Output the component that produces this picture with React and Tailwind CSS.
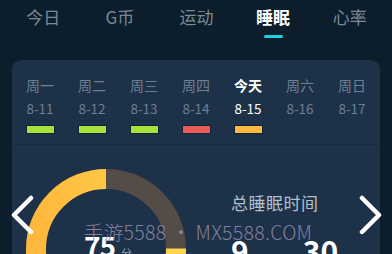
import React from "react";

const tabs = ["今日", "G币", "运动", "睡眠", "心率"];

const days = [
  { name: "周一", date: "8-11", bar: "bg-[#a6e23a]" },
  { name: "周二", date: "8-12", bar: "bg-[#a6e23a]" },
  { name: "周三", date: "8-13", bar: "bg-[#a6e23a]" },
  { name: "周四", date: "8-14", bar: "bg-[#ec5b55]" },
  { name: "今天", date: "8-15", bar: "bg-[#ffb93e]", today: true },
  { name: "周六", date: "8-16" },
  { name: "周日", date: "8-17" },
];

function ScoreRing({ score }) {
  const r = 70;
  const c = 2 * Math.PI * r;
  return (
    <svg width="160" height="160" viewBox="0 0 160 160" className="block">
      <defs>
        <linearGradient id="ring" x1="0" y1="0" x2="0" y2="1">
          <stop offset="0" stopColor="#ffd54d" />
          <stop offset="1" stopColor="#ffb83d" />
        </linearGradient>
      </defs>
      <circle cx="80" cy="80" r={r} fill="none" stroke="#544c47" strokeWidth="20" />
      <circle
        cx="80"
        cy="80"
        r={r}
        fill="none"
        stroke="url(#ring)"
        strokeWidth="20"
        strokeDasharray={`${(score / 100) * c} ${c}`}
        transform="translate(160 0) scale(-1 1) rotate(-90 80 80)"
      />
    </svg>
  );
}

function Chevron({ dir }) {
  const d = dir === "left" ? "M21 3 L4 20 L21 37" : "M4 3 L21 20 L4 37";
  return (
    <svg width="25" height="40" viewBox="0 0 25 40">
      <path d={d} fill="none" stroke="#ffffff" strokeWidth="4.5" strokeLinecap="round" strokeLinejoin="round" />
    </svg>
  );
}

export default function App() {
  return (
    <div
      className="relative w-[392px] h-[254px] overflow-hidden bg-[#0c1e2c]"
      style={{ fontFamily: '"Noto Sans CJK SC", "Noto Sans", sans-serif' }}
    >
      <div className="flex h-[60px] pl-[5px] pr-[4px]">
        {tabs.map((t, i) => (
          <div key={t} className="flex-1 flex flex-col items-center pt-[4px]">
            <span
              className={
                i === 3
                  ? "text-[17px] leading-[26px] text-white font-bold"
                  : "text-[17px] leading-[26px] text-[#7b8995]"
              }
            >
              {t}
            </span>
            {i === 3 && <div className="mt-[5px] w-[19px] h-[3px] rounded-full bg-[#19d3de]" />}
          </div>
        ))}
      </div>

      <div className="mx-3 rounded-t-[9px] bg-[#1d3148] h-[220px]">
        <div className="grid grid-cols-7 px-[2px] pt-[15px]">
          {days.map((d) => (
            <div key={d.date} className="flex flex-col items-center">
              <span
                className={
                  d.today
                    ? "text-[14px] leading-[20px] text-white font-bold"
                    : "text-[14px] leading-[20px] text-[#6d7f91]"
                }
              >
                {d.name}
              </span>
              <span
                className={
                  d.today
                    ? "mt-[3px] text-[13.5px] leading-[20px] text-white"
                    : "mt-[3px] text-[13.5px] leading-[20px] text-[#6d7f91]"
                }
              >
                {d.date}
              </span>
              {d.bar ? (
                <div className={`mt-[7px] w-[29px] h-[9px] border border-[#10233a] ${d.bar}`} />
              ) : (
                <div className="mt-[7px] h-[9px]" />
              )}
            </div>
          ))}
        </div>
        <div className="mt-[10px] h-px bg-[#172a3f]" />

        <div className="flex pl-[14px] pt-[24px]">
          <div className="relative">
            <ScoreRing score={75} />
            <div className="absolute left-[58px] top-[62px] flex items-end">
              <span className="text-[28px] leading-none font-bold text-white tracking-[-1px]">75</span>
              <span className="ml-[6px] text-[11px] leading-none text-[#9aa5b1]">分</span>
            </div>
          </div>
          <div className="ml-[45px] pt-[22px] flex flex-col">
            <span className="text-[17px] leading-[24px] text-[#b4c0cc] tracking-[0.5px]">总睡眠时间</span>
            <div className="mt-[20px] flex items-start">
              <span className="text-[30px] leading-none font-bold text-white">9</span>
              <span className="ml-[54px] text-[30px] leading-none font-bold text-white">30</span>
            </div>
          </div>
        </div>
      </div>

      <div className="absolute left-[84px] top-[219px] text-[19.5px] leading-[26px] font-light text-[#8f8aa9]/90 whitespace-nowrap tracking-[0.3px]">
        手游5588 • MX5588.COM
      </div>

      <div className="absolute left-[10px] top-[195px]">
        <Chevron dir="left" />
      </div>
      <div className="absolute left-[358px] top-[195px]">
        <Chevron dir="right" />
      </div>
    </div>
  );
}
